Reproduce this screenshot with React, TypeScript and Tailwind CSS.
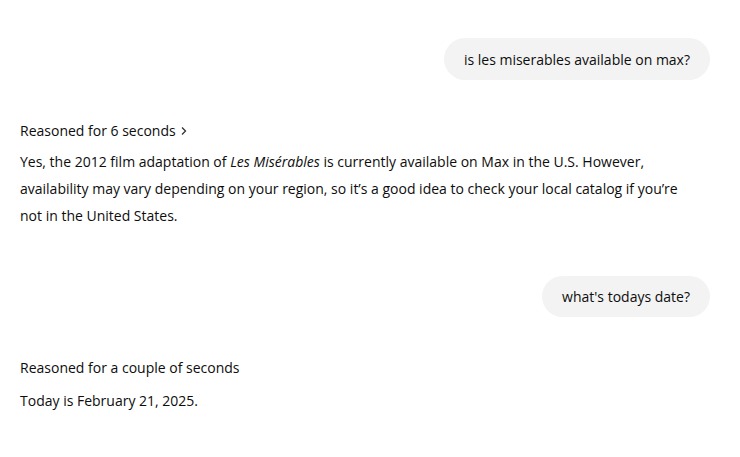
import React from "react";

export default function App() {
  return (
    <div className="w-[740px] h-[457px] bg-white text-[#0d0d0d] pl-5 pr-[30px] pt-[38px]" style={{ fontFamily: '"Open Sans", "Noto Sans", sans-serif' }}>
      <div className="flex justify-end">
        <div className="bg-[#f3f3f3] rounded-[21px] h-[42px] px-5 flex items-center text-[14px]">is les miserables available on max?</div>
      </div>
      <div className="mt-[40px] flex items-center gap-1 text-[14px] leading-[22px]">
        <span>Reasoned for 6 seconds</span>
        <svg width="8" height="10" viewBox="0 0 8 10" fill="none" stroke="#333" strokeWidth="1.3"><path d="M2 1.5 L5.5 5 L2 8.5" /></svg>
      </div>
      <p className="mt-[6px] text-[14px] leading-[27px] max-w-[675px]">
        Yes, the 2012 film adaptation of <em>Les Misérables</em> is currently available on Max in the U.S. However, availability may vary depending on your region, so it’s a good idea to check your local catalog if you’re not in the United States.
      </p>
      <div className="mt-[47px] flex justify-end">
        <div className="bg-[#f3f3f3] rounded-[21px] h-[41px] px-5 flex items-center text-[14px]">what's todays date?</div>
      </div>
      <div className="mt-[40px] text-[14px] leading-[22px]">Reasoned for a couple of seconds</div>
      <p className="mt-[11px] text-[14px] leading-[22px]">Today is February 21, 2025.</p>
    </div>
  );
}
